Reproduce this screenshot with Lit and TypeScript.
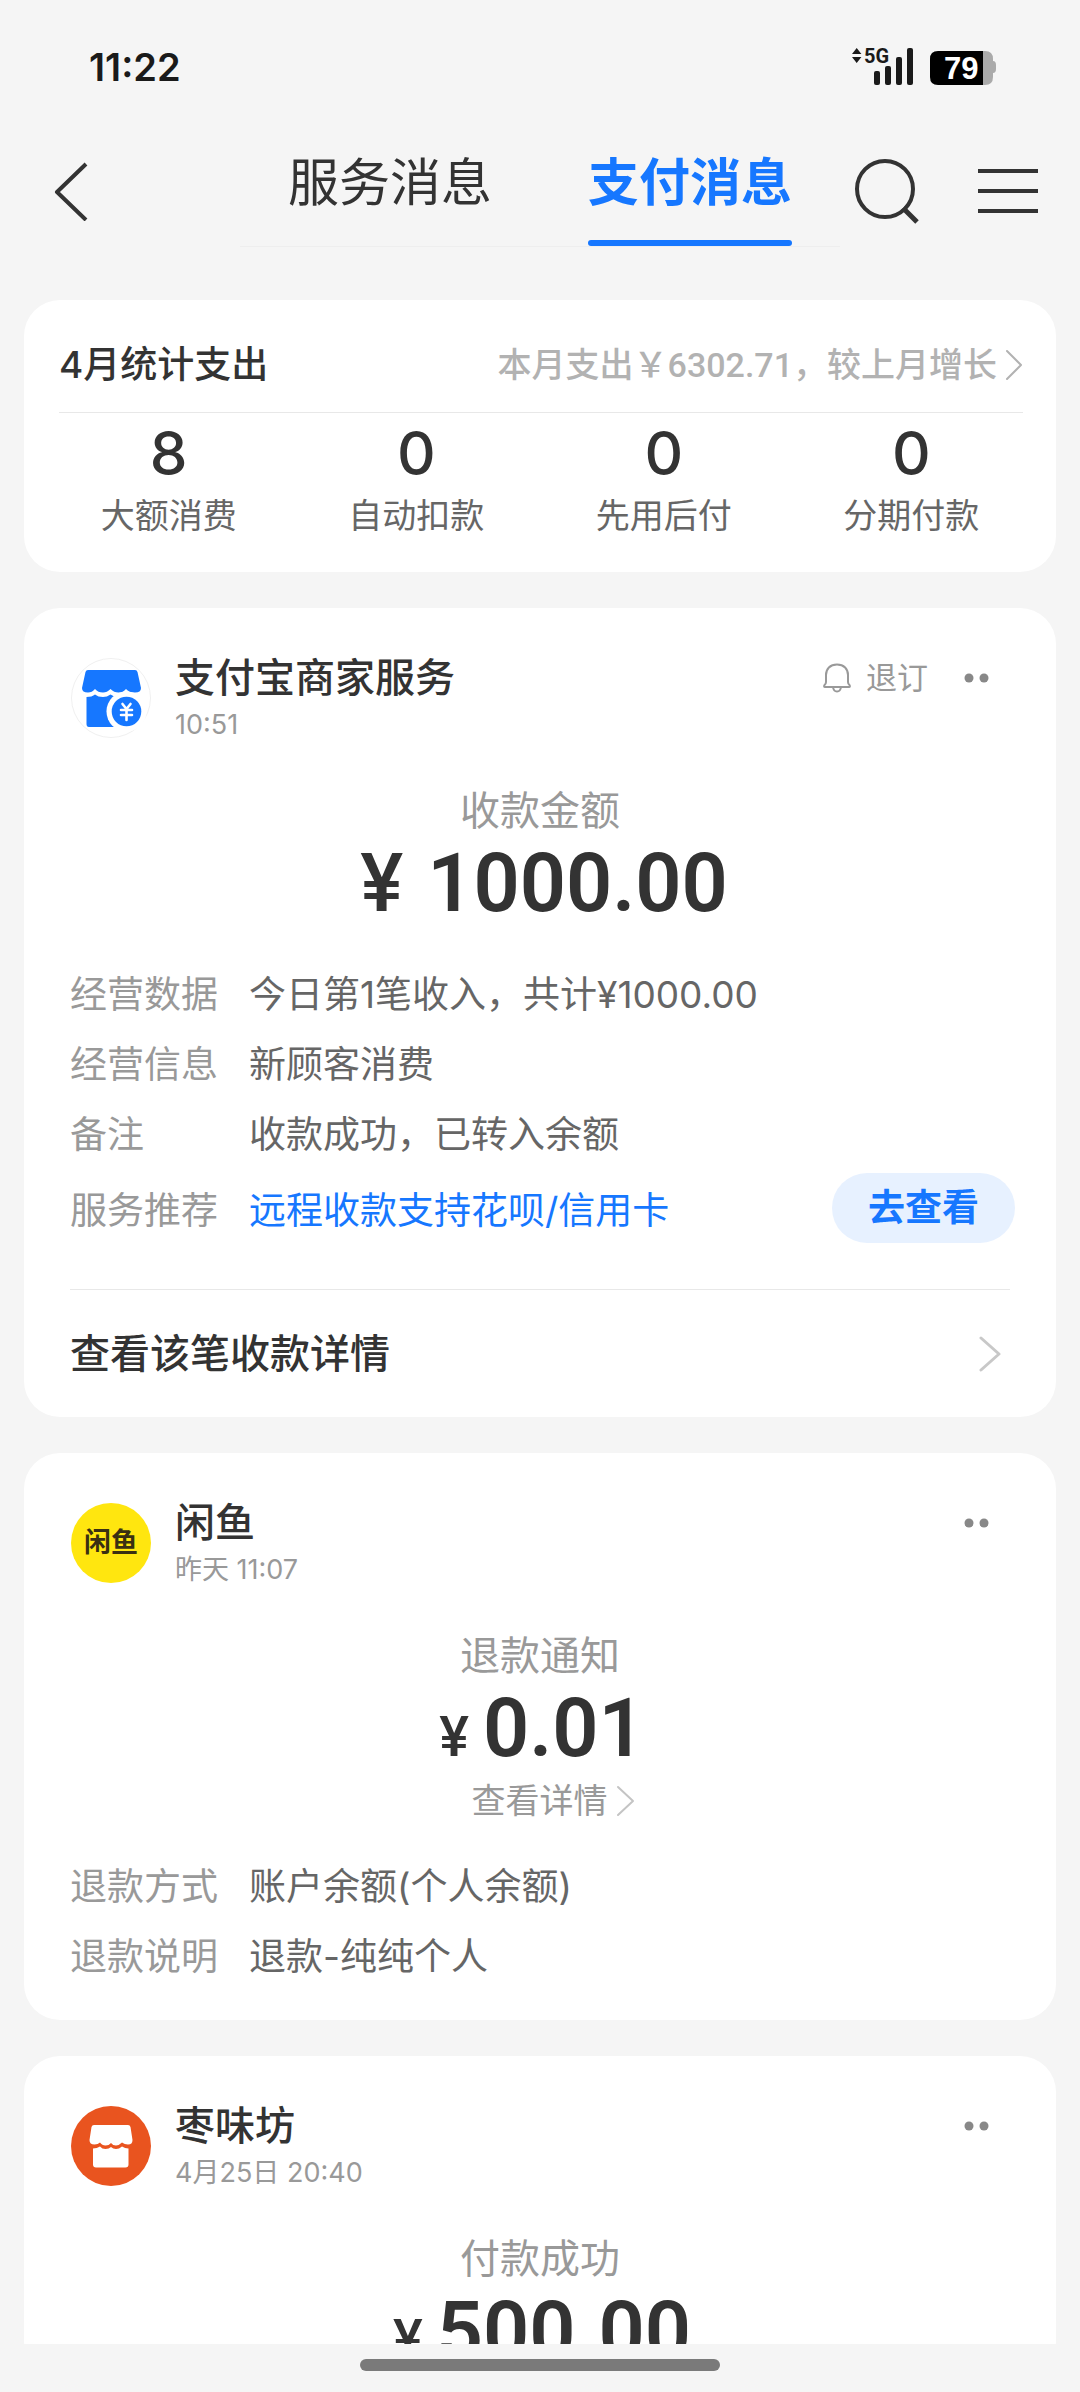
import { LitElement, html, css, svg, nothing, type TemplateResult } from "lit";
import { customElement, property, state } from "lit/decorators.js";
import { classMap } from "lit/directives/class-map.js";

interface Detail {
  label: string;
  value: string;
  action?: string;
}

interface Message {
  icon: "merchant" | "xianyu" | "store";
  name: string;
  time: string;
  unsubscribe?: boolean;
  caption: string;
  amount: string;
  largeSign?: boolean;
  more?: string;
  details: Detail[];
  footer?: string;
}

const MESSAGES: Message[] = [
  {
    icon: "merchant",
    name: "支付宝商家服务",
    time: "10:51",
    unsubscribe: true,
    caption: "收款金额",
    amount: "1000.00",
    largeSign: true,
    details: [
      { label: "经营数据", value: "今日第1笔收入，共计¥1000.00" },
      { label: "经营信息", value: "新顾客消费" },
      { label: "备注", value: "收款成功，已转入余额" },
      { label: "服务推荐", value: "远程收款支持花呗/信用卡", action: "去查看" },
    ],
    footer: "查看该笔收款详情",
  },
  {
    icon: "xianyu",
    name: "闲鱼",
    time: "昨天 11:07",
    caption: "退款通知",
    amount: "0.01",
    more: "查看详情",
    details: [
      { label: "退款方式", value: "账户余额(个人余额)" },
      { label: "退款说明", value: "退款-纯纯个人" },
    ],
  },
  {
    icon: "store",
    name: "枣味坊",
    time: "4月25日 20:40",
    caption: "付款成功",
    amount: "500.00",
    details: [],
  },
];

const STATS = [
  { count: 8, label: "大额消费" },
  { count: 0, label: "自动扣款" },
  { count: 0, label: "先用后付" },
  { count: 0, label: "分期付款" },
];

const reset = css`
  * {
    box-sizing: border-box;
  }
  button {
    margin: 0;
    padding: 0;
    border: 0;
    background: none;
    color: inherit;
    font: inherit;
    cursor: pointer;
  }
  a {
    color: inherit;
    text-decoration: none;
  }
  h1, h2, p, dl, dd, dt {
    margin: 0;
    font-weight: inherit;
    font-size: inherit;
  }
  svg {
    display: block;
    flex: none;
  }
`;

const chevron = (width: number, height: number, stroke: number) => svg`
  <svg width=${width} height=${height} viewBox="0 0 ${width} ${height}" fill="none" stroke="currentColor"
    stroke-width=${stroke} stroke-linecap="round" stroke-linejoin="round" aria-hidden="true">
    <path d="M2 2L${width - 2} ${height / 2}L2 ${height - 2}" />
  </svg>`;

@customElement("status-bar")
class StatusBar extends LitElement {
  static styles = [
    reset,
    css`
      :host {
        box-sizing: border-box;
        display: flex;
        flex: none;
        align-items: center;
        justify-content: space-between;
        height: 132px;
        padding: 2px 84px 0 89px;
        color: #1a1a1a;
      }
      .time {
        font-size: 38px;
        font-weight: 600;
        line-height: 48px;
      }
      .network {
        font: 700 20px/24px Roboto, sans-serif;
      }
      .level {
        font: 700 31px/34px "Liberation Sans", sans-serif;
      }
    `,
  ];

  render() {
    return html`
      <span class="time">11:22</span>
      <svg width="144" height="54" viewBox="0 -8 144 54" role="img" aria-label="5G, 79%">
        <g fill="#1a1a1a">
          <path d="M0 6L4.700 0L9.400 6ZM0 9L4.700 15L9.400 9Z" />
          <text class="network" x="12" y="15">5G</text>
          <rect x="22" y="23" width="6" height="14" rx="2" />
          <rect x="33" y="18" width="6" height="19" rx="2" />
          <rect x="44" y="9" width="6" height="28" rx="2" />
          <rect x="55" y="0" width="6" height="37" rx="2" />
        </g>
        <path d="M131 3H133Q141 3 141 11V13Q144 13 144 17V21Q144 25 141 25V29Q141 37 133 37H131Z" fill="#aaa" />
        <path d="M86 3H131V37H86Q78 37 78 29V11Q78 3 86 3Z" fill="#000" />
        <text class="level" x="92" y="31" fill="#fff">79</text>
      </svg>
    `;
  }
}

@customElement("nav-bar")
class NavBar extends LitElement {
  @state() private active = 1;

  static styles = [
    reset,
    css`
      :host {
        display: grid;
        flex: none;
        grid-template-columns: 2fr 5fr 2fr;
        height: 118px;
        color: #333;
      }
      .back {
        display: flex;
        align-items: center;
        padding-left: 52px;
      }
      .tabs {
        display: flex;
        align-self: start;
        border-bottom: 1px solid #eee;
      }
      .tab {
        display: flex;
        flex: 1;
        flex-direction: column;
        align-items: center;
        gap: 6px;
        font-size: 51px;
        line-height: 102px;
      }
      .tab::after {
        width: 204px;
        height: 6px;
        border-radius: 3px;
        content: "";
      }
      .active {
        color: #1677ff;
        font-weight: 700;
      }
      .active::after {
        background: #1677ff;
      }
      .actions {
        display: flex;
        align-items: center;
        justify-content: flex-end;
        gap: 58px;
        padding-right: 42px;
      }
    `,
  ];

  render() {
    return html`
      <button class="back" aria-label="返回">
        <svg width="36" height="60" viewBox="0 0 36 60" fill="none" stroke="currentColor" stroke-width="4">
          <path d="M34 3L5 31L34 59" stroke-linejoin="round" />
        </svg>
      </button>
      <div class="tabs" role="tablist">
        ${["服务消息", "支付消息"].map(
          (label, i) => html`<button
            role="tab"
            aria-selected=${i === this.active}
            class=${classMap({ tab: true, active: i === this.active })}
            @click=${() => (this.active = i)}
          >${label}</button>`,
        )}
      </div>
      <div class="actions">
        <button aria-label="搜索">
          <svg width="66" height="66" viewBox="0 0 66 66" fill="none" stroke="currentColor" stroke-width="4">
            <circle cx="31" cy="31" r="28" />
            <path d="M49 50L63 64" stroke-width="5" />
          </svg>
        </button>
        <button aria-label="菜单">
          <svg width="60" height="44" viewBox="0 0 60 44" stroke="currentColor" stroke-width="4">
            <path d="M0 2H60M0 22H60M0 42H60" />
          </svg>
        </button>
      </div>
    `;
  }
}

@customElement("spending-summary")
class SpendingSummary extends LitElement {
  static styles = [
    reset,
    css`
      :host {
        display: block;
        flex: none;
        padding: 0 21px 31px;
        border-radius: 36px;
        background: #fff;
      }
      .head {
        display: flex;
        align-items: center;
        justify-content: space-between;
        margin: 0 12px 0 14px;
        padding: 40px 0 22px;
        border-bottom: 1px solid #e8e8e8;
        line-height: 50px;
      }
      .title {
        color: #333;
        font-size: 37px;
        font-weight: 500;
      }
      .trend {
        display: flex;
        align-items: center;
        gap: 8px;
        color: #b2b2b2;
        font-family: Roboto, "Noto Sans CJK SC", sans-serif;
        font-size: 34px;
        font-weight: 500;
      }
      .stats {
        display: grid;
        grid-template-columns: repeat(4, 1fr);
        padding-top: 8px;
      }
      .stat {
        display: flex;
        flex-direction: column;
        align-items: center;
        gap: 6px;
      }
      .count {
        color: #333;
        font-size: 60px;
        font-weight: 500;
        line-height: 64px;
      }
      .label {
        color: #666;
        font-size: 34px;
        line-height: 50px;
      }
    `,
  ];

  render() {
    return html`
      <div class="head">
        <h2 class="title">4月统计支出</h2>
        <a class="trend" href="#trend">本月支出￥6302.71，较上月增长${chevron(18, 32, 2)}</a>
      </div>
      <div class="stats">
        ${STATS.map(
          (s) => html`<a class="stat" href="#stat">
            <span class="count">${s.count}</span>
            <span class="label">${s.label}</span>
          </a>`,
        )}
      </div>
    `;
  }
}

const LOGOS: Record<Message["icon"], TemplateResult> = {
  merchant: html`
    <svg width="80" height="80" viewBox="0 0 80 80" aria-hidden="true">
      <circle cx="40" cy="40" r="39.500" fill="#fff" stroke="#f0f0f0" />
      <g fill="#1677ff">
        <path d="M17 12H64Q66 12 66.500 14L70 30Q70 34.500 64 34.500Q58 34.500 55 31Q52 34.500 47.500 34.500Q43 34.500 39.500 31Q36 34.500 32 34.500Q27 34.500 24 31Q21 34.500 17 34.500Q11 34.500 11 30L14.500 14Q15 12 17 12Z" />
        <path d="M15.500 39Q21 39 24 36.500Q27 39 32 39Q36 39 39.500 36.500Q43 39 47.500 39L60 42V69H18Q15.500 69 15.500 66Z" />
      </g>
      <circle cx="55.500" cy="53.500" r="20" fill="#fff" />
      <circle cx="55.500" cy="53.500" r="14.800" fill="#1677ff" />
      <path d="M51.500 46L55.500 51L59.500 46M50 52H61M50 57H61M55.500 51V62" fill="none" stroke="#fff" stroke-width="2.600" stroke-linecap="round" />
    </svg>`,
  xianyu: html`<span class="wordmark" aria-hidden="true">闲鱼</span>`,
  store: html`
    <svg width="80" height="80" viewBox="0 0 80 80" aria-hidden="true">
      <circle cx="40" cy="40" r="40" fill="#e9541f" />
      <g fill="#fff">
        <path d="M23 19H57Q59 19 59.500 21L61.500 34Q61.500 38.500 57 38.500Q53.500 38.500 51 36.500Q48 39.500 45 39.500Q42 39.500 40 37Q38 39.500 34.500 39.500Q31 39.500 29 36.500Q27 38.500 23.500 38.500Q18.500 38.500 18.500 34L20.500 21Q21 19 23 19Z" />
        <path d="M22 42.500Q26 42.500 29 40.500Q31 43 34.500 43Q38 43 40 41Q42 43 45 43Q48 43 51 40.500Q54 42.500 57.500 42.500V58.500Q57.500 61.500 54.500 61.500H25Q22 61.500 22 58.500Z" />
      </g>
    </svg>`,
};

@customElement("message-card")
class MessageCard extends LitElement {
  @property({ attribute: false }) message!: Message;

  static styles = [
    reset,
    css`
      :host {
        display: block;
        flex: none;
        border-radius: 36px;
        background: #fff;
      }
      .head {
        display: flex;
        align-items: flex-start;
        gap: 24px;
        padding: 50px 66px 0 47px;
      }
      .logo {
        display: flex;
        flex: none;
      }
      .wordmark {
        width: 80px;
        height: 80px;
        border-radius: 40px;
        background: #ffe60f;
        color: #3a3012;
        font-size: 27px;
        font-weight: 700;
        line-height: 80px;
        text-align: center;
      }
      .who {
        flex: 1;
      }
      .name {
        color: #333;
        font-size: 40px;
        font-weight: 500;
        line-height: 40px;
      }
      .time {
        color: #999;
        font-size: 27px;
        line-height: 54px;
      }
      .tools {
        display: flex;
        align-items: center;
        gap: 36px;
        height: 40px;
        color: #888;
      }
      .unsubscribe {
        display: flex;
        align-items: center;
        gap: 14px;
        color: #999;
        font-size: 31px;
        line-height: 40px;
      }
      .body {
        display: flex;
        flex-direction: column;
        align-items: center;
        padding-top: 31px;
      }
      .caption {
        color: #999;
        font-size: 40px;
        line-height: 56px;
      }
      .amount {
        display: flex;
        align-items: baseline;
        gap: 14px;
        padding-left: 4px;
        color: #333;
        font: 600 81px/90px Roboto, sans-serif;
      }
      .sign {
        font-size: 56px;
        font-weight: 500;
        line-height: 56px;
      }
      .large {
        gap: 24px;
        padding-left: 8px;
      }
      .large .sign {
        font-size: 81px;
        line-height: 90px;
      }
      .more {
        display: flex;
        align-items: center;
        gap: 8px;
        padding-left: 26px;
        color: #999;
        font-size: 34px;
        line-height: 54px;
      }
      .more svg {
        color: #c4c4c4;
      }
      .details {
        padding: 28px 41px 40px 46px;
        font-size: 37px;
      }
      .compact {
        padding-top: 21px;
        padding-bottom: 31px;
      }
      .row {
        display: grid;
        grid-template-columns: 179px 1fr auto;
        align-items: center;
        min-height: 70px;
      }
      .promoted {
        min-height: 82px;
      }
      .key {
        color: #999;
      }
      .value {
        color: #666;
      }
      .promoted .value {
        color: #1677ff;
      }
      .action {
        padding: 0 36px;
        border-radius: 35px;
        background: #e7f1ff;
        color: #1677ff;
        font-weight: 700;
        line-height: 70px;
      }
      .footer {
        display: flex;
        align-items: center;
        justify-content: space-between;
        margin: 0 46px;
        padding-right: 9px;
        border-top: 1px solid #e8e8e8;
        color: #333;
        font-size: 40px;
        font-weight: 500;
        line-height: 127px;
      }
      .footer svg {
        color: #c8c8c8;
      }
    `,
  ];

  render() {
    const m = this.message;
    return html`
      <div class="head">
        <div class="logo">${LOGOS[m.icon]}</div>
        <div class="who">
          <h2 class="name">${m.name}</h2>
          <p class="time">${m.time}</p>
        </div>
        <div class="tools">
          ${m.unsubscribe
            ? html`<button class="unsubscribe">
                <svg width="30" height="30" viewBox="0 0 30 30" fill="none" stroke="currentColor" stroke-width="2" stroke-linejoin="round" aria-hidden="true">
                  <path d="M15 1.500C8 1.500 4 6 4 12V19Q4 21 2.500 22Q1.500 24 3 24H27Q28.500 24 27.500 22Q26 21 26 19V12C26 6 22 1.500 15 1.500ZM11 24Q11.500 28.500 15 28.500Q18.500 28.500 19 24" />
                </svg>退订
              </button>`
            : nothing}
          <button aria-label="更多">
            <svg width="26" height="10" viewBox="0 0 26 10" fill="currentColor">
              <circle cx="5" cy="5" r="4.500" /><circle cx="20" cy="5" r="4.500" />
            </svg>
          </button>
        </div>
      </div>
      <div class="body">
        <p class="caption">${m.caption}</p>
        <p class=${classMap({ amount: true, large: !!m.largeSign })}>
          <span class="sign">¥</span><span>${m.amount}</span>
        </p>
        ${m.more ? html`<a class="more" href="#detail">${m.more}${chevron(19, 32, 2)}</a>` : nothing}
      </div>
      ${m.details.length
        ? html`<dl class=${classMap({ details: true, compact: !m.footer })}>
            ${m.details.map(
              (d) => html`<div class=${classMap({ row: true, promoted: !!d.action })}>
                <dt class="key">${d.label}</dt>
                <dd class="value">${d.action ? html`<a href="#offer">${d.value}</a>` : d.value}</dd>
                ${d.action ? html`<dd><button class="action">${d.action}</button></dd>` : nothing}
              </div>`,
            )}
          </dl>`
        : nothing}
      ${m.footer ? html`<a class="footer" href="#bill">${m.footer}${chevron(22, 36, 3)}</a>` : nothing}
    `;
  }
}

@customElement("app-root")
class AppRoot extends LitElement {
  static styles = [
    reset,
    css`
      :host {
        display: flex;
        flex-direction: column;
        height: 100vh;
        background: #f5f5f5;
        font-family: Inter, "Noto Sans CJK SC", sans-serif;
      }
      .feed {
        display: flex;
        flex: 1;
        flex-direction: column;
        gap: 36px;
        min-height: 0;
        padding: 50px 24px 0;
        overflow-y: auto;
        scrollbar-width: none;
      }
      .home {
        display: flex;
        flex: none;
        justify-content: center;
        padding: 15px 0 21px;
      }
      .handle {
        width: 33.333%;
        height: 12px;
        border-radius: 6px;
        background: #7a7a7a;
      }
    `,
  ];

  render() {
    return html`
      <status-bar></status-bar>
      <nav-bar></nav-bar>
      <main class="feed">
        <spending-summary></spending-summary>
        ${MESSAGES.map((m) => html`<message-card .message=${m}></message-card>`)}
      </main>
      <div class="home"><div class="handle"></div></div>
    `;
  }
}
